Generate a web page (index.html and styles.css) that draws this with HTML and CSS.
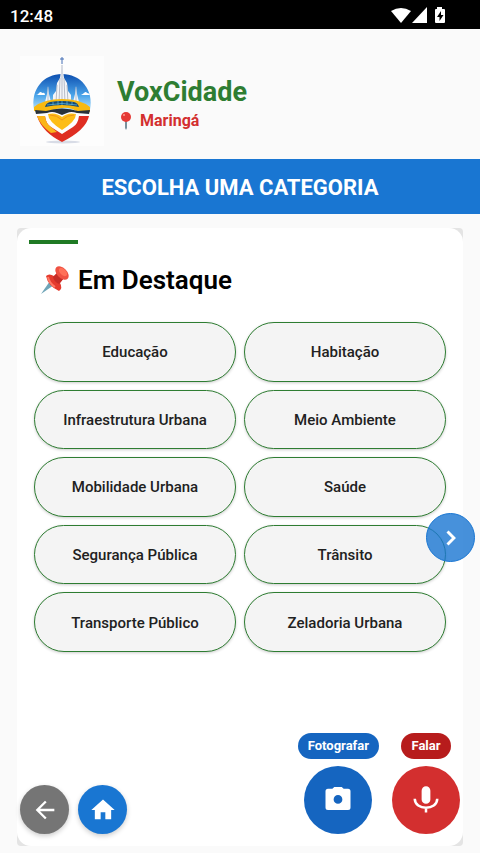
FILE: index.html
```html
<!DOCTYPE html>
<html lang="pt-BR">
<head>
  <meta charset="UTF-8" />
  <meta name="viewport" content="width=device-width, initial-scale=1.0"/>
  <title>VoxCidade</title>
  <link rel="stylesheet" href="styles.css">
</head>
<body>
  <div class="status-bar">
    <span>12:48</span>
    <svg class="status-icons" width="56" height="18" viewBox="0 0 56 18" fill="#fff" aria-hidden="true">
      <path d="M0 4Q10-2 20 4L10 16Z"/>
      <path d="M36 0V16H21Z"/>
      <path fill-rule="evenodd" d="M46 0h5v2h2q1 0 1 1v12q0 1-1 1h-8q-1 0-1-1V3q0-1 1-1h1zM50 4l-4 6h2.500v4l4-6H50z"/>
    </svg>
  </div>

  <header class="header">
    <div class="logo">
      <svg width="84" height="88" viewBox="0 0 84 88" aria-hidden="true">
        <defs>
          <linearGradient id="sky" x1="0" y1="0" x2="0" y2="1">
            <stop offset="0" stop-color="#0d4fb0"/>
            <stop offset=".6" stop-color="#4ba5ea"/>
            <stop offset="1" stop-color="#b9e2fa"/>
          </linearGradient>
        </defs>
        <ellipse cx="43" cy="86" rx="17" ry="1.500" fill="#d8dce6"/>
        <path d="M14 54C10 33 24 18 42 18S74 33 70 54Z" fill="url(#sky)"/>
        <path d="M16 39q2 0 3-2 2-2 3 0 3-1 3 2zM61 39q2-1 3-2 2-2 3 0 2 0 3 2z" fill="#fff"/>
        <path d="M28 30l1 8 3 12h-8l3-12zM56 30l1 8 3 12h-8l3-12z" fill="#f2f4f8"/>
        <path d="M28 31v18M56 31v18" stroke="#9aaac2" stroke-width=".7"/>
        <path d="M42 7l2 15 3 5 1 8 3 4v8H33v-8l3-4 1-8 3-5z" fill="#f4f5f8"/>
        <path d="M42 9v38M44 22l1 25M40 22l-1 25M37 29l-1 18M47 29l1 18" stroke="#9ba4b5" stroke-width=".7" fill="none"/>
        <path d="M42 1v7M40 3h4" stroke="#456fb5"/>
        <path d="M14 51Q24 43 42 43T70 51V56L59 57Q52 51 42 52T25 57L14 55Z" fill="#f8b90f"/>
        <path d="M25 51q1-4 5-5 12-2 24 0 4 1 5 5-9-2-17-2t-17 2z" fill="#164a72"/>
        <path d="M33 46v3M38 45v4M42 45v4M47 45v4M52 46v3M27 49q15-3 30 0" stroke="#5ab0d4" stroke-width=".8" fill="none"/>
        <path d="M15 54l11 1q16-5 32 0l12-1-1 4-12-1q-6-2-10 0l-5 2-5-2q-5-2-10 0l-11 1z" fill="#29323a"/>
        <path d="M17 60l8 0q1 8 6 11l11 7 11-7q5-3 6-11h10Q66 74 42 86 22 76 17 60z" fill="#df2e22"/>
        <path d="M17 60h8q1 8 6 11l6 5-6 1Q20 69 17 60z" fill="#fab51a"/>
        <path d="M42 61q-6-5-14-3 0 7 14 16 14-9 14-16-8-2-14 3z" fill="#fdbd17"/>
        <path d="M30 59q7 0 12 5 5-5 12-5" stroke="#ee941b" fill="none"/>
      </svg>
    </div>
    <div class="brand">
      <h1>VoxCidade</h1>
      <p class="city">
        <svg width="16" height="18" viewBox="0 0 16 18" aria-hidden="true">
          <path d="M7 8h2v8l-1 2-1-2z" fill="#78909c"/>
          <circle cx="8" cy="5" r="5" fill="#e53935"/>
          <circle cx="6" cy="3" r="1" fill="#ff9e8f"/>
        </svg>
        <span>Maringá</span>
      </p>
    </div>
  </header>

  <h2 class="banner">ESCOLHA UMA CATEGORIA</h2>

  <main class="content">
    <div class="card-back">
      <section class="card">
        <div class="accent"></div>
        <h3 class="title">
          <svg width="28" height="28" viewBox="0 0 28 28" aria-hidden="true">
            <path d="M0 28l9-13 4 4z" fill="#6fa5b8"/>
            <path d="M5 10q3-3 8 0l4-4 6 6-4 5q3 5-1 8Q7 20 5 10z" fill="#e53b2e"/>
            <path d="M12 11l5-5 6 6-5 6q-5-2-6-7z" fill="#c62d27"/>
            <ellipse cx="21" cy="7" rx="5" ry="8" transform="rotate(-45 21 7)" fill="#ef5142"/>
            <ellipse cx="22" cy="6" rx="3" ry="5" transform="rotate(-45 22 6)" fill="#ff7058"/>
            <path d="M7 11q1 6 7 10" stroke="#ff7864" stroke-width="2" fill="none"/>
          </svg>
          <span>Em Destaque</span>
        </h3>

        <div class="categories">
          <button type="button">Educação</button>
          <button type="button">Habitação</button>
          <button type="button">Infraestrutura Urbana</button>
          <button type="button">Meio Ambiente</button>
          <button type="button">Mobilidade Urbana</button>
          <button type="button">Saúde</button>
          <button type="button">Segurança Pública</button>
          <button type="button">Trânsito</button>
          <button type="button">Transporte Público</button>
          <button type="button">Zeladoria Urbana</button>
        </div>

        <div class="actions">
          <div class="nav-buttons">
            <button type="button" class="round back" aria-label="Voltar">
              <svg width="28" height="28" viewBox="0 0 24 24" fill="#fff"><path d="M20 11H7.800l5.600-5.600L12 4l-8 8 8 8 1.400-1.400L7.800 13H20z"/></svg>
            </button>
            <button type="button" class="round home" aria-label="Início">
              <svg width="28" height="28" viewBox="0 0 24 24" fill="#fff"><path d="M10 20v-6h4v6h5v-8h3L12 3 2 12h3v8z"/></svg>
            </button>
          </div>
          <div class="media-buttons">
            <div class="media">
              <label class="tag photo-tag" for="photo">Fotografar</label>
              <button type="button" id="photo" class="big photo">
                <svg width="30" height="30" viewBox="0 0 24 24" fill="#fff"><path fill-rule="evenodd" d="M9 1.500L7.500 3H4Q2 3 2 5v13q0 2 2 2h16q2 0 2-2V5q0-2-2-2h-3.500L15 1.500zM12 8a3.500 3.500 0 1 1 0 7 3.500 3.500 0 0 1 0-7z"/></svg>
              </button>
            </div>
            <div class="media">
              <label class="tag speak-tag" for="speak">Falar</label>
              <button type="button" id="speak" class="big speak">
                <svg width="30" height="30" viewBox="0 0 24 24" fill="none" stroke="#fff" stroke-width="2"><rect x="9.500" y="2" width="5" height="12" rx="2.500" fill="#fff"/><path d="M3 11C3 20.500 21 20.500 21 11M12 18v4"/></svg>
              </button>
            </div>
          </div>
        </div>
      </section>
      <button type="button" class="round next" aria-label="Próxima página">
        <svg width="28" height="28" viewBox="0 0 24 24" fill="none" stroke="#fff" stroke-width="2.500"><path d="M9 6.500l5.500 5.500L9 17.500"/></svg>
      </button>
    </div>
  </main>
</body>
</html>
```
FILE: styles.css
```css
* {
  box-sizing: border-box;
  margin: 0;
  padding: 0;
}

body {
  font-family: Roboto, sans-serif;
  background: #fafafa;
  color: #212121;
  display: flex;
  flex-direction: column;
  min-height: 100vh;
}

button {
  font-family: inherit;
  border: none;
  cursor: pointer;
}

svg {
  display: block;
  flex: none;
}

.status-bar {
  display: flex;
  align-items: center;
  justify-content: space-between;
  height: 29px;
  padding: 2px 33px 0 10px;
  background: #000;
  color: #fff;
  font-size: 17px;
  font-weight: 500;
}

/* header */
.header {
  display: flex;
  align-items: center;
  gap: 12px;
  height: 130px;
  padding: 14px 20px 0;
}

.logo {
  padding-bottom: 2px;
  background: #fdfdfd;
}

.brand {
  padding: 4px 0 0 1px;
}

h1 {
  font-size: 27px;
  line-height: 32px;
  font-weight: 700;
  color: #2e7d32;
}

.city {
  display: flex;
  align-items: center;
  gap: 6px;
  padding: 3px 0 0 1px;
  font-size: 16px;
  line-height: 20px;
  font-weight: 700;
  color: #d32f2f;
}

.banner {
  padding: 15px 14px 13px;
  background: #1976d2;
  color: #fff;
  font-size: 22px;
  line-height: 27px;
  font-weight: 700;
  text-align: center;
}

/* card */
.content {
  flex: 1;
  display: flex;
  padding: 14px 17px 7px;
}

.card-back {
  position: relative;
  flex: 1;
  display: flex;
  background: #e4e4e4;
  border-radius: 4px;
}

.card {
  flex: 1;
  display: flex;
  flex-direction: column;
  padding: 12px 3px;
  background: #fff;
  border-radius: 14px;
}

.accent {
  width: 49px;
  height: 4px;
  margin-left: 9px;
  background: #1f7a24;
}

.title {
  display: flex;
  align-items: center;
  gap: 9px;
  padding: 20px 21px 26px;
  font-size: 26px;
  line-height: 32px;
  font-weight: 600;
  color: #000;
}

.categories {
  display: grid;
  grid-template-columns: 1fr 1fr;
  grid-auto-rows: 1fr;
  gap: 8px;
  min-height: 330px;
  padding: 0 14px;
}

.categories button {
  padding-top: 1px;
  background: #f4f4f4;
  border: 1px solid #2e7d32;
  border-radius: 30px;
  box-shadow: 0 1px 3px rgba(0, 0, 0, 0.2);
  color: #212121;
  font-size: 15px;
  font-weight: 500;
}

.actions {
  display: flex;
  align-items: flex-end;
  justify-content: space-between;
  margin-top: auto;
  padding-top: 20px;
}

.nav-buttons {
  display: flex;
  gap: 9px;
}

.round,
.big {
  display: flex;
  align-items: center;
  justify-content: center;
  border-radius: 50%;
}

.round {
  width: 49px;
  height: 49px;
}

.back {
  background: #757575;
  box-shadow: 0 2px 5px rgba(0, 0, 0, 0.2);
}

.home {
  background: #1976d2;
  box-shadow: 0 2px 5px rgba(0, 0, 0, 0.2);
}

.next {
  position: absolute;
  top: 285px;
  right: -12px;
  background: rgba(25, 118, 210, 0.8);
  border: 1px solid #1976d2;
}

.media-buttons {
  display: flex;
  gap: 13px;
}

.media {
  display: flex;
  flex-direction: column;
  align-items: center;
  gap: 7px;
}

.big {
  width: 68px;
  height: 68px;
}

.tag {
  padding: 0 10px;
  border-radius: 13px;
  color: #fff;
  font-size: 13px;
  line-height: 26px;
  font-weight: 700;
}

.photo,
.photo-tag {
  background: #1565c0;
}

.speak {
  background: #d32f2f;
}

.speak-tag {
  background: #b71c1c;
}
```
